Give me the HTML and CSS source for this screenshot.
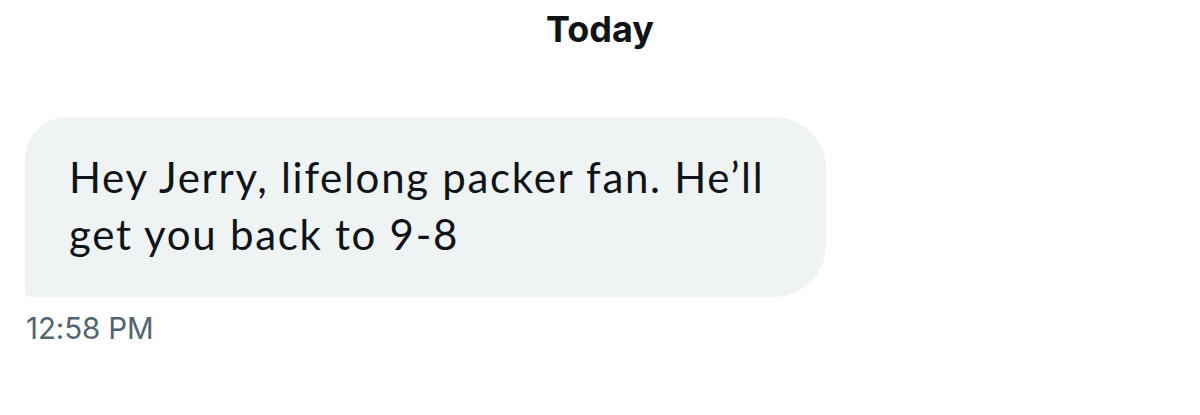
FILE: index.html
```html
<!DOCTYPE html>
<html>
<head>
<meta charset="utf-8">
<link rel="stylesheet" href="styles.css">
</head>
<body>
<div class="chat">
  <div class="day">Today</div>
  <div class="msg">
    <div class="bubble">Hey Jerry, lifelong packer fan. He’ll get you back to 9-8</div>
    <div class="time">12:58 PM</div>
  </div>
</div>
</body>
</html>
```
FILE: styles.css
```css
html, body {
  margin: 0;
  padding: 0;
  background: #ffffff;
}
.chat {
  width: 1200px;
  height: 415px;
  display: flex;
  flex-direction: column;
}
.day {
  font-family: Inter, "Liberation Sans", sans-serif;
  font-weight: 700;
  font-size: 36px;
  color: #0f1419;
  text-align: center;
  padding-top: 9px;
  line-height: 40px;
}
.msg {
  margin-top: 68px;
  padding-left: 25px;
  display: flex;
  flex-direction: column;
  align-items: flex-start;
}
.bubble {
  box-sizing: border-box;
  width: 801px;
  height: 180px;
  background: #eff3f4;
  border-radius: 42px 52px 52px 5px;
  padding: 32px 50px 0 44px;
  font-family: Lato, "Noto Sans", sans-serif;
  font-size: 42px;
  line-height: 57px;
  letter-spacing: 1.7px;
  color: #0f1419;
}
.time {
  margin-top: 14px;
  padding-left: 1px;
  font-family: Inter, "Liberation Sans", sans-serif;
  font-size: 29.5px;
  line-height: 34px;
  color: #536471;
  letter-spacing: -0.1px;
}
```
